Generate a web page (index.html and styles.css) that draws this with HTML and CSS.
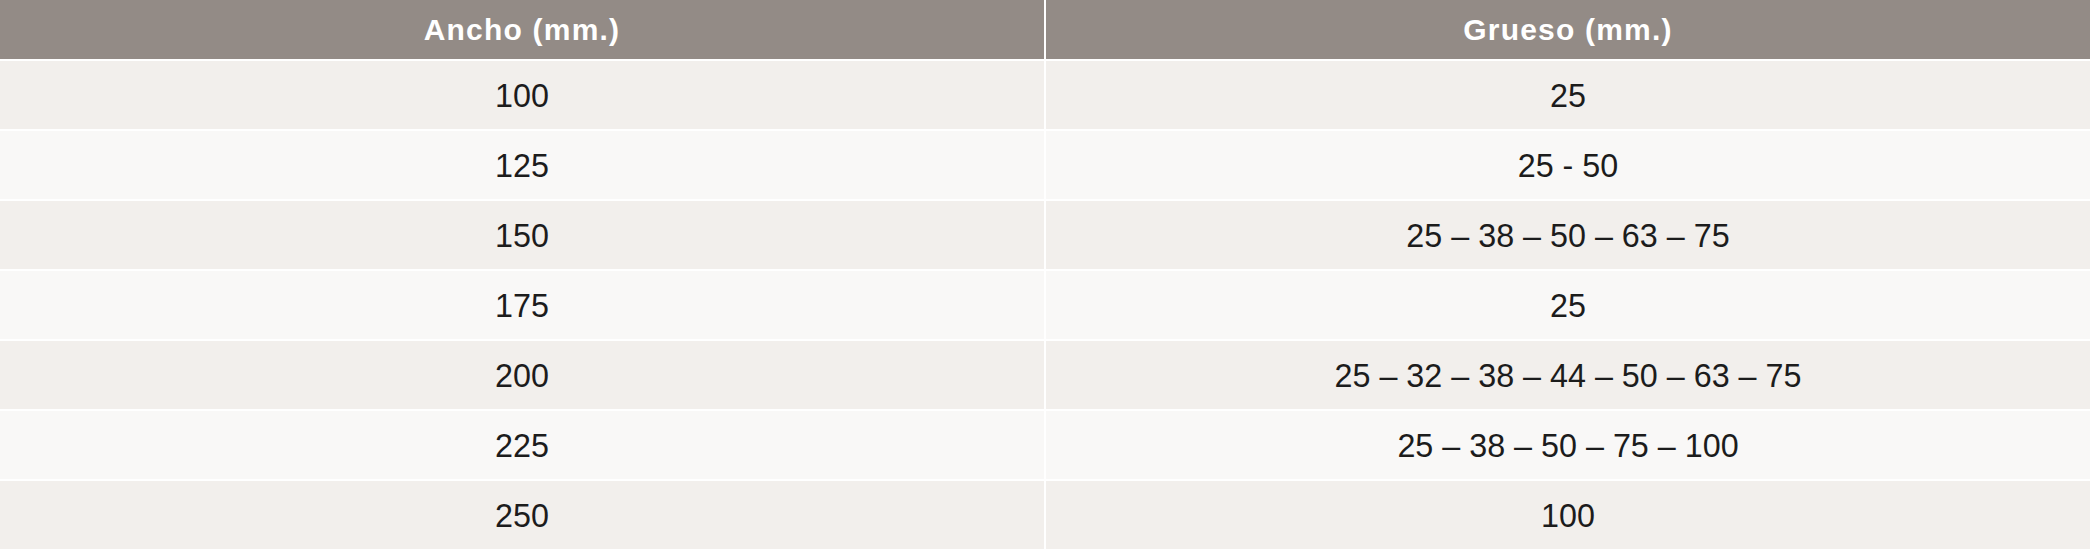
FILE: index.html
```html
<!DOCTYPE html>
<html lang="es">
<head>
<meta charset="utf-8">
<title>Medidas</title>
<link rel="stylesheet" href="styles.css">
</head>
<body>
<div class="table">
  <div class="cell head">Ancho (mm.)</div>
  <div class="cell head">Grueso (mm.)</div>

  <div class="cell odd">100</div>
  <div class="cell odd">25</div>

  <div class="cell even">125</div>
  <div class="cell even">25 - 50</div>

  <div class="cell odd">150</div>
  <div class="cell odd">25 – 38 – 50 – 63 – 75</div>

  <div class="cell even">175</div>
  <div class="cell even">25</div>

  <div class="cell odd">200</div>
  <div class="cell odd">25 – 32 – 38 – 44 – 50 – 63 – 75</div>

  <div class="cell even">225</div>
  <div class="cell even">25 – 38 – 50 – 75 – 100</div>

  <div class="cell odd">250</div>
  <div class="cell odd">100</div>
</div>
</body>
</html>
```

FILE: styles.css
```css
html, body {
  margin: 0;
  padding: 0;
  background: #ffffff;
}

.table {
  display: grid;
  grid-template-columns: 1fr 1fr;
  grid-template-rows: 59px repeat(7, 68px);
  column-gap: 2px;
  row-gap: 2px;
  width: 2090px;
  background: #ffffff;
  font-family: "Liberation Sans", Arial, sans-serif;
}

.cell {
  display: flex;
  align-items: center;
  justify-content: center;
  font-size: 32.3px;
  color: #1c1c1c;
  padding-top: 2px;
}

.head {
  background: #938b86;
  color: #ffffff;
  font-weight: bold;
  font-size: 30px;
  letter-spacing: 1.2px;
  padding-top: 0;
}

.odd {
  background: #f2efec;
}

.even {
  background: #f9f8f7;
}
```
